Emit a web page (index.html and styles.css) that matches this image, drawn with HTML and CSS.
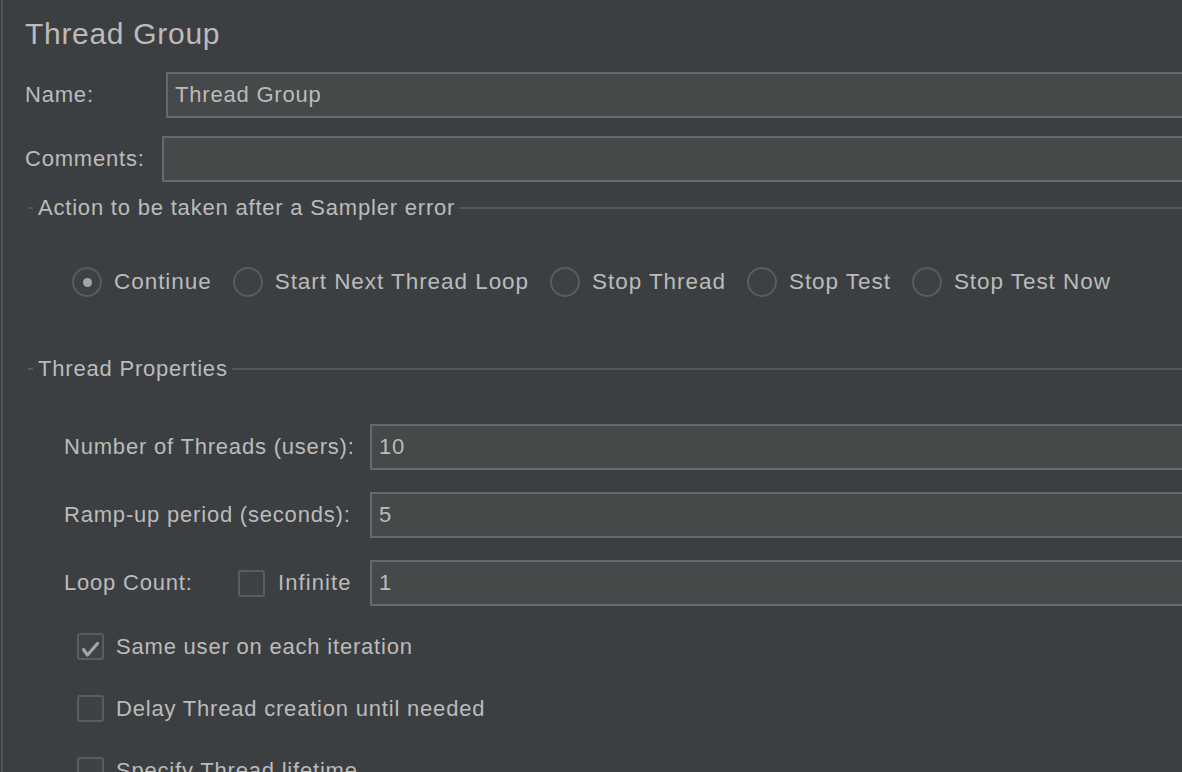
FILE: index.html
```html
<!DOCTYPE html>
<html>
<head>
<meta charset="utf-8">
<link rel="stylesheet" href="styles.css">
</head>
<body>
<div class="panel">
  <div class="title">Thread Group</div>

  <div class="row row-name">
    <label class="lbl lbl-name">Name:</label>
    <div class="field"><span class="val">Thread Group</span></div>
  </div>
  <div class="row row-comments">
    <label class="lbl lbl-comments">Comments:</label>
    <div class="field"></div>
  </div>

  <div class="section-head sec-action">
    <span class="dash"></span>
    <span class="sec-title">Action to be taken after a Sampler error</span>
    <span class="sec-line"></span>
  </div>

  <div class="radios">
    <div class="radio-item"><span class="radio checked"><span class="dot"></span></span><span class="txt">Continue</span></div>
    <div class="radio-item"><span class="radio"></span><span class="txt">Start Next Thread Loop</span></div>
    <div class="radio-item"><span class="radio"></span><span class="txt">Stop Thread</span></div>
    <div class="radio-item"><span class="radio"></span><span class="txt">Stop Test</span></div>
    <div class="radio-item"><span class="radio"></span><span class="txt">Stop Test Now</span></div>
  </div>

  <div class="section-head sec-props">
    <span class="dash"></span>
    <span class="sec-title">Thread Properties</span>
    <span class="sec-line"></span>
  </div>

  <div class="props">
    <div class="row prop-row">
      <label class="lbl lbl-prop">Number of Threads (users):</label>
      <div class="field"><span class="val">10</span></div>
    </div>
    <div class="row prop-row">
      <label class="lbl lbl-prop">Ramp-up period (seconds):</label>
      <div class="field"><span class="val">5</span></div>
    </div>
    <div class="row prop-row">
      <div class="lbl lbl-prop loop">
        <span class="loop-text">Loop Count:</span>
        <span class="check"></span>
        <span class="txt">Infinite</span>
      </div>
      <div class="field"><span class="val">1</span></div>
    </div>
  </div>

  <div class="checks">
    <div class="check-item">
      <span class="check checked">
        <svg width="23" height="23" viewBox="0 0 23 23"><path d="M4.5 14.5 L8.5 20 L18.5 8.5" fill="none" stroke="#a2a4a6" stroke-width="3.2" stroke-linecap="round" stroke-linejoin="round"/></svg>
      </span>
      <span class="txt">Same user on each iteration</span>
    </div>
    <div class="check-item"><span class="check"></span><span class="txt">Delay Thread creation until needed</span></div>
    <div class="check-item"><span class="check"></span><span class="txt">Specify Thread lifetime</span></div>
  </div>
</div>
</body>
</html>
```

FILE: styles.css
```css
html, body {
  margin: 0;
  padding: 0;
  background: #3c3f41;
  overflow: hidden;
  height: 772px;
}

body {
  font-family: "Liberation Sans", Arial, sans-serif;
  color: #bbbbbb;
  font-size: 22px;
  letter-spacing: 0.8px;
}

.panel {
  margin-left: 1px;
  border-left: 2px solid #505356;
  padding-left: 22px;
  padding-top: 14px;
  height: 772px;
  box-sizing: border-box;
  overflow: hidden;
}

.title {
  height: 40px;
  line-height: 40px;
  font-size: 30px;
  letter-spacing: 0.7px;
}

.row {
  display: flex;
  align-items: center;
  height: 46px;
}

.row-name { margin-top: 18px; }
.row-comments { margin-top: 18px; }

.lbl {
  flex: none;
  white-space: nowrap;
}

.lbl-name { width: 141px; }
.lbl-comments { width: 137px; }

.field {
  flex: 1;
  height: 46px;
  box-sizing: border-box;
  background: #45494a;
  border: 2px solid #65696b;
  margin-right: -20px;
  display: flex;
  align-items: center;
  padding-left: 7px;
}

.val {
  white-space: nowrap;
}

.section-head {
  display: flex;
  align-items: center;
  height: 24px;
  margin-left: 3px;
  margin-right: -20px;
}

.sec-action { margin-top: 14px; }
.sec-props { margin-top: 60px; }

.dash {
  width: 5px;
  height: 2px;
  background: #55585a;
  margin-right: 5px;
  flex: none;
}

.sec-title {
  white-space: nowrap;
  flex: none;
}

.sec-line {
  flex: 1;
  height: 2px;
  background: #55585a;
  margin-left: 4px;
  margin-top: -1px;
}

.radios {
  display: flex;
  align-items: center;
  height: 30px;
  margin-top: 47px;
  padding-left: 47px;
  gap: 21px;
  font-size: 22.5px;
  letter-spacing: 0.95px;
}

.radio-item {
  display: flex;
  align-items: center;
  gap: 12px;
  white-space: nowrap;
}

.radio {
  width: 30px;
  height: 30px;
  box-sizing: border-box;
  border: 2px solid #5a5d5f;
  border-radius: 50%;
  background: #3e4143;
  display: flex;
  align-items: center;
  justify-content: center;
  flex: none;
}

.dot {
  width: 9px;
  height: 9px;
  border-radius: 50%;
  background: #a2a4a6;
}

.props {
  margin-top: 43px;
  padding-left: 39px;
  display: flex;
  flex-direction: column;
  gap: 22px;
}

.lbl-prop { width: 306px; }

.loop {
  display: flex;
  align-items: center;
}

.loop-text { width: 174px; flex: none; }

.loop .check { margin-right: 13px; }

.loop .txt { letter-spacing: 1.1px; }

.check {
  width: 27px;
  height: 27px;
  box-sizing: border-box;
  border: 2px solid #5a5d5f;
  border-radius: 3px;
  background: #3f4244;
  display: flex;
  align-items: center;
  justify-content: center;
  flex: none;
}

.check svg {
  display: block;
}

.checks {
  margin-top: 27px;
  padding-left: 52px;
  display: flex;
  flex-direction: column;
  gap: 35px;
}

.check-item {
  display: flex;
  align-items: center;
  gap: 12px;
  height: 27px;
  white-space: nowrap;
}
```
